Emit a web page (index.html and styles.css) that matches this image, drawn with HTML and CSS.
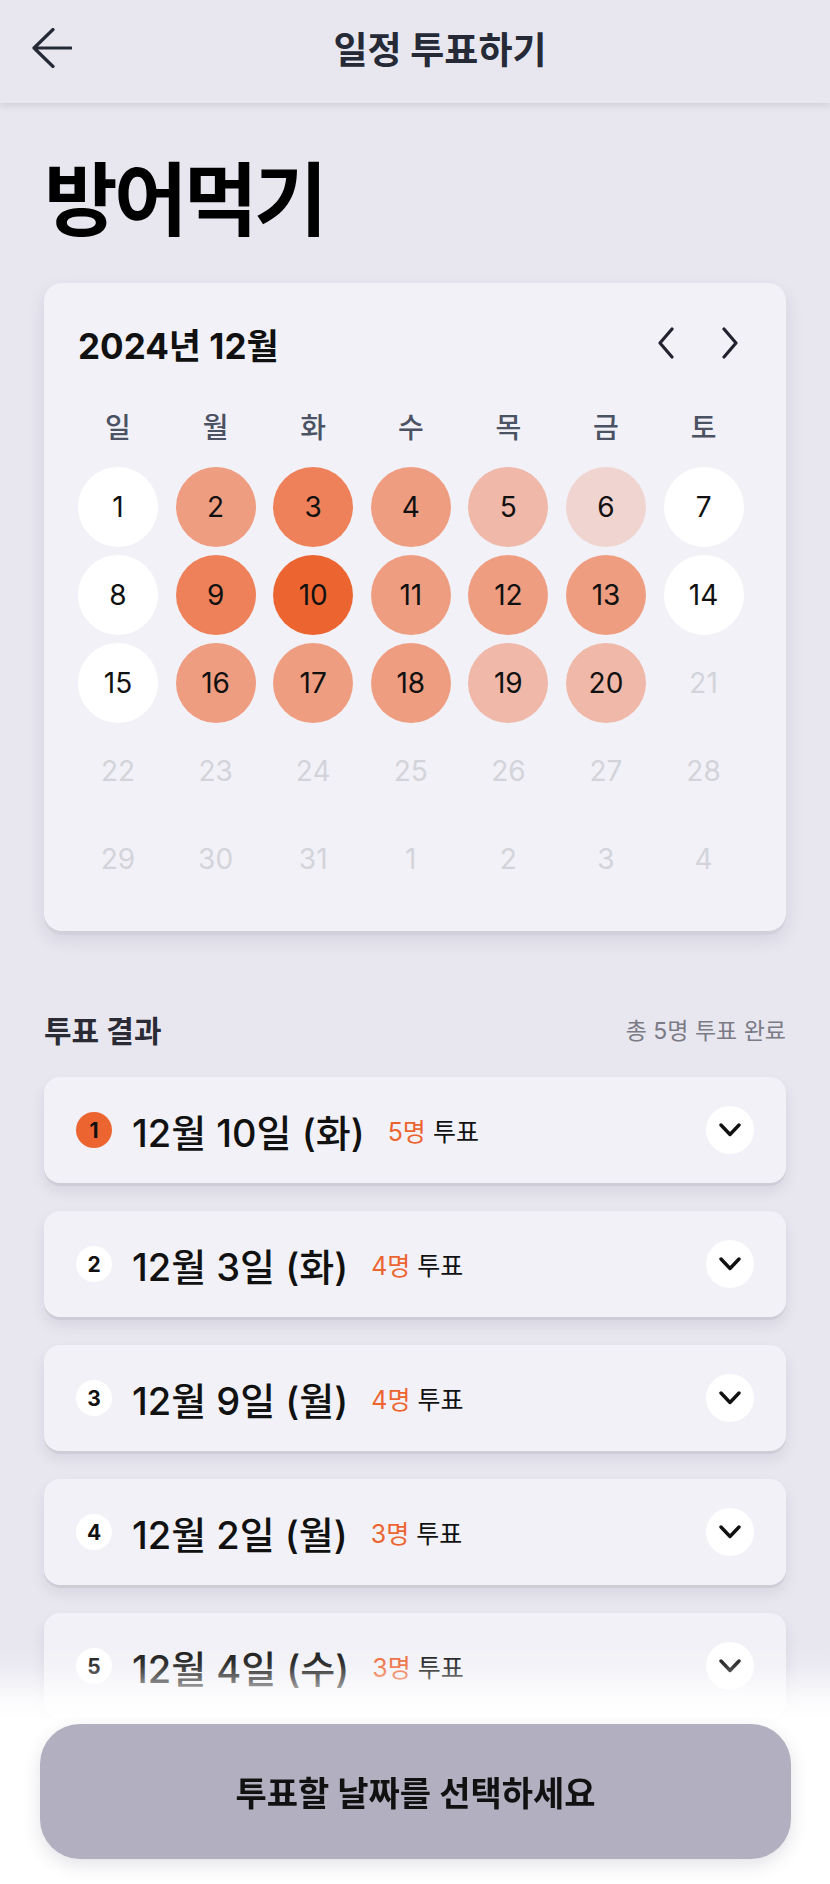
FILE: index.html
```html
<!DOCTYPE html>
<html lang="ko">
<head>
<meta charset="utf-8">
<title>일정 투표하기</title>
<link rel="stylesheet" href="styles.css">
</head>
<body>
<header class="topbar">
  <button class="back-btn" aria-label="뒤로">
    <svg width="40" height="40" viewBox="0 0 40 40" fill="none" stroke="currentColor" stroke-width="3.2" stroke-linecap="round" stroke-linejoin="round"><path d="M39 20H2M21 1.5L2 20L21 38.5"/></svg>
  </button>
  <h1 class="topbar-title">일정 투표하기</h1>
</header>

<main class="content">
  <h2 class="event-title">방어먹기</h2>

  <section class="calendar">
    <div class="cal-head">
      <span class="cal-month">2024년 12월</span>
      <div class="cal-nav">
        <button class="nav-btn" aria-label="이전 달"><svg width="18" height="32" viewBox="0 0 18 32" fill="none" stroke="currentColor" stroke-width="3.2" stroke-linecap="round" stroke-linejoin="round"><path d="M15 2L3 16L15 30"/></svg></button>
        <button class="nav-btn" aria-label="다음 달"><svg width="18" height="32" viewBox="0 0 18 32" fill="none" stroke="currentColor" stroke-width="3.2" stroke-linecap="round" stroke-linejoin="round"><path d="M3 2L15 16L3 30"/></svg></button>
      </div>
    </div>
    <div class="cal-weekdays">
      <span>일</span><span>월</span><span>화</span><span>수</span><span>목</span><span>금</span><span>토</span>
    </div>
    <div class="cal-days">
      <span class="day v0">1</span><span class="day v3">2</span><span class="day v4">3</span><span class="day v3">4</span><span class="day v2">5</span><span class="day v1">6</span><span class="day v0">7</span>
      <span class="day v0">8</span><span class="day v4">9</span><span class="day v5">10</span><span class="day v3">11</span><span class="day v3">12</span><span class="day v3">13</span><span class="day v0">14</span>
      <span class="day v0">15</span><span class="day v3">16</span><span class="day v3">17</span><span class="day v3">18</span><span class="day v2">19</span><span class="day v2">20</span><span class="day off">21</span>
      <span class="day off">22</span><span class="day off">23</span><span class="day off">24</span><span class="day off">25</span><span class="day off">26</span><span class="day off">27</span><span class="day off">28</span>
      <span class="day off">29</span><span class="day off">30</span><span class="day off">31</span><span class="day off">1</span><span class="day off">2</span><span class="day off">3</span><span class="day off">4</span>
    </div>
  </section>

  <section class="results">
    <div class="results-head">
      <h3 class="results-title">투표 결과</h3>
      <span class="results-total">총 5명 투표 완료</span>
    </div>
    <ul class="result-list">
      <li class="result-item">
        <span class="rank rank-top">1</span>
        <span class="result-date">12월 10일 (화)</span>
        <span class="result-count"><em>5명</em> 투표</span>
        <button class="expand-btn" aria-label="펼치기"><svg width="22" height="14" viewBox="0 0 22 14" fill="none" stroke="currentColor" stroke-width="3.4" stroke-linecap="round" stroke-linejoin="round"><path d="M2 2L11 11.5L20 2"/></svg></button>
      </li>
      <li class="result-item">
        <span class="rank">2</span>
        <span class="result-date">12월 3일 (화)</span>
        <span class="result-count"><em>4명</em> 투표</span>
        <button class="expand-btn" aria-label="펼치기"><svg width="22" height="14" viewBox="0 0 22 14" fill="none" stroke="currentColor" stroke-width="3.4" stroke-linecap="round" stroke-linejoin="round"><path d="M2 2L11 11.5L20 2"/></svg></button>
      </li>
      <li class="result-item">
        <span class="rank">3</span>
        <span class="result-date">12월 9일 (월)</span>
        <span class="result-count"><em>4명</em> 투표</span>
        <button class="expand-btn" aria-label="펼치기"><svg width="22" height="14" viewBox="0 0 22 14" fill="none" stroke="currentColor" stroke-width="3.4" stroke-linecap="round" stroke-linejoin="round"><path d="M2 2L11 11.5L20 2"/></svg></button>
      </li>
      <li class="result-item">
        <span class="rank">4</span>
        <span class="result-date">12월 2일 (월)</span>
        <span class="result-count"><em>3명</em> 투표</span>
        <button class="expand-btn" aria-label="펼치기"><svg width="22" height="14" viewBox="0 0 22 14" fill="none" stroke="currentColor" stroke-width="3.4" stroke-linecap="round" stroke-linejoin="round"><path d="M2 2L11 11.5L20 2"/></svg></button>
      </li>
      <li class="result-item">
        <span class="rank">5</span>
        <span class="result-date">12월 4일 (수)</span>
        <span class="result-count"><em>3명</em> 투표</span>
        <button class="expand-btn" aria-label="펼치기"><svg width="22" height="14" viewBox="0 0 22 14" fill="none" stroke="currentColor" stroke-width="3.4" stroke-linecap="round" stroke-linejoin="round"><path d="M2 2L11 11.5L20 2"/></svg></button>
      </li>
    </ul>
  </section>
</main>

<div class="bottom-bar">
  <button class="cta">투표할 날짜를 선택하세요</button>
</div>
</body>
</html>
```

FILE: styles.css
```css
* { box-sizing: border-box; }

html, body {
  margin: 0;
  padding: 0;
}

body {
  background: #e8e7f0;
  font-family: Inter, "Noto Sans CJK KR", sans-serif;
  color: #111;
}

button {
  font-family: inherit;
  border: 0;
  background: none;
  padding: 0;
  cursor: pointer;
}

/* top bar */
.topbar {
  display: flex;
  align-items: center;
  height: 103px;
  padding: 0 32px 7px;
  background: #e8e7f0;
  box-shadow: 0 2px 8px rgba(60, 55, 90, 0.16);
  position: relative;
  z-index: 2;
}

.back-btn {
  width: 50px;
  height: 44px;
  display: flex;
  align-items: center;
  color: #252a36;
}

.topbar-title {
  flex: 1;
  margin: 0;
  text-align: center;
  font-size: 37px;
  font-weight: 700;
  color: #252a36;
}

/* content */
.content {
  padding: 0 44px 150px;
}

.event-title {
  margin: 49px 0 35px;
  font-size: 80px;
  line-height: 1.2;
  font-weight: 700;
  color: #000;
  letter-spacing: -0.045em;
}

/* calendar */
.calendar {
  background: #f2f1f7;
  border-radius: 18px;
  padding: 32px 34px 32px 34px;
  box-shadow: 0 4px 0 rgba(0, 0, 0, 0.03), 0 8px 18px rgba(60, 55, 90, 0.12);
}

.cal-head {
  display: flex;
  align-items: center;
  justify-content: space-between;
  height: 56px;
}

.cal-month {
  font-size: 35px;
  font-weight: 700;
  color: #111;
}

.cal-nav {
  display: flex;
  gap: 20px;
}

.nav-btn {
  width: 44px;
  height: 44px;
  display: flex;
  align-items: center;
  justify-content: center;
  color: #22232f;
}

.cal-weekdays,
.cal-days {
  display: grid;
  grid-template-columns: repeat(7, 80px);
  column-gap: 17.6px;
}

.cal-weekdays {
  margin-top: 37px;
  height: 40px;
  align-items: center;
}

.cal-weekdays span {
  text-align: center;
  font-size: 28px;
  font-weight: 500;
  color: #4b5263;
  line-height: 40px;
}

.cal-days {
  margin-top: 19px;
  grid-auto-rows: 80px;
  row-gap: 8px;
}

.day {
  width: 80px;
  height: 80px;
  border-radius: 50%;
  display: flex;
  align-items: center;
  justify-content: center;
  font-size: 28px;
  color: #111;
}

.v0 { background: #ffffff; }
.v1 { background: rgba(236, 101, 49, 0.2); }
.v2 { background: rgba(236, 101, 49, 0.4); }
.v3 { background: rgba(236, 101, 49, 0.6); }
.v4 { background: rgba(236, 101, 49, 0.8); }
.v5 { background: rgb(236, 101, 49); }

.day.off {
  color: #d3d4da;
}

/* results */
.results {
  margin-top: 78px;
}

.results-head {
  display: flex;
  align-items: center;
  justify-content: space-between;
  height: 40px;
}

.results-title {
  margin: 0;
  font-size: 30px;
  font-weight: 700;
  color: #2b2b36;
}

.results-total {
  font-size: 23px;
  color: #7b7b86;
}

.result-list {
  list-style: none;
  margin: 28px 0 0;
  padding: 0;
  display: flex;
  flex-direction: column;
  gap: 28px;
}

.result-item {
  display: flex;
  align-items: center;
  height: 106px;
  padding: 0 32px;
  background: #f2f1f7;
  border-radius: 16px;
  box-shadow: 0 3px 0 rgba(0, 0, 0, 0.05), 0 8px 14px rgba(60, 55, 90, 0.1);
}

.rank {
  width: 36px;
  height: 36px;
  border-radius: 50%;
  background: #fff;
  display: flex;
  align-items: center;
  justify-content: center;
  font-size: 21px;
  font-weight: 700;
  color: #111;
  flex-shrink: 0;
}

.rank-top {
  background: #ec6531;
}

.result-date {
  margin-left: 20px;
  font-size: 38px;
  font-weight: 500;
  color: #111;
}

.result-count {
  margin-left: 23px;
  font-size: 25px;
  color: #111;
}

.result-count em {
  font-style: normal;
  color: #ec6531;
}

.expand-btn {
  margin-left: auto;
  width: 48px;
  height: 48px;
  border-radius: 50%;
  background: #fff;
  display: flex;
  align-items: center;
  justify-content: center;
  color: #111;
}

/* bottom call to action */
.bottom-bar {
  position: fixed;
  left: 0;
  right: 0;
  bottom: 0;
  padding: 84px 39px 25px 40px;
  background: linear-gradient(to bottom,
    rgba(255, 255, 255, 0) 0,
    rgba(255, 255, 255, 0.15) 25px,
    rgba(255, 255, 255, 0.85) 62px,
    #fff 84px);
  z-index: 3;
}

.cta {
  display: block;
  width: 100%;
  height: 135px;
  border-radius: 40px;
  background: #b2afc0;
  font-size: 34px;
  font-weight: 700;
  color: #111;
  box-shadow: 0 6px 18px rgba(60, 55, 90, 0.14);
}
```
